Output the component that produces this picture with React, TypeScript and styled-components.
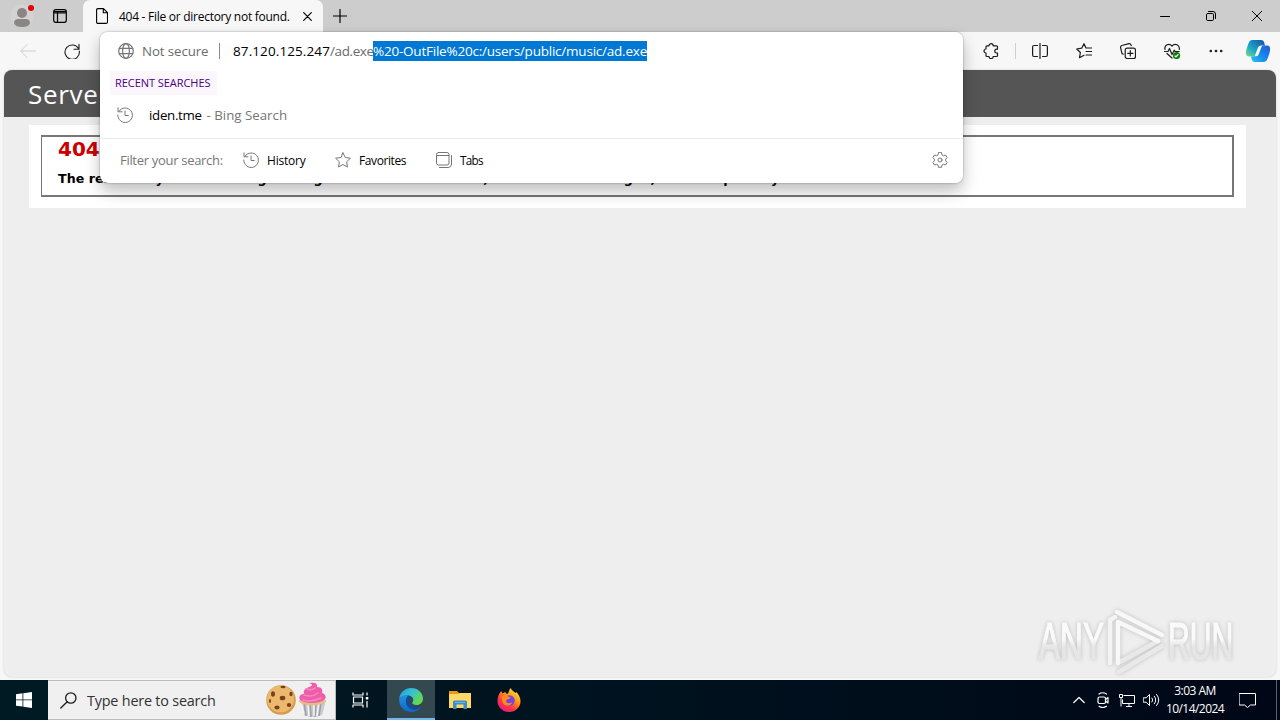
import React from 'react'
import styled, { createGlobalStyle, css } from 'styled-components'

const GlobalStyle = createGlobalStyle`
  * {
    box-sizing: border-box;
  }

  body {
    margin: 0;
    overflow: hidden;
    font-family: 'Open Sans', 'Noto Sans', sans-serif;
    font-size: 12px;
    color: #000;
  }

  svg {
    display: block;
    flex: none;
  }
`

const Screen = styled.div`
  position: relative;
  display: flex;
  flex-direction: column;
  width: 1280px;
  height: 720px;
  background: #f7f7f7;
`

const center = css`
  display: flex;
  align-items: center;
  justify-content: center;
`

const TabStrip = styled.header`
  display: flex;
  height: 32px;
  background: #cdcdcd;
`

const Slot = styled.div<{ $width: number }>`
  ${center}
  flex: none;
  width: ${props => props.$width}px;
`

const Profile = styled(Slot)`
  position: relative;
  color: #8b8685;
`

const ProfileDot = styled.i`
  position: absolute;
  top: 5px;
  left: 28px;
  width: 6px;
  height: 6px;
  border-radius: 50%;
  background: #e3000b;
`

const Tab = styled.div`
  display: flex;
  align-items: center;
  width: 240px;
  padding-left: 13px;
  background: #f7f7f7;
  border-radius: 7px 7px 0 0;
`

const Text = styled.span<{ $width?: number; $size?: number; $spacing?: number; $color?: string }>`
  flex: none;
  white-space: pre;
  width: ${props => (props.$width ? `${props.$width}px` : 'auto')};
  font-size: ${props => props.$size || 12}px;
  letter-spacing: ${props => props.$spacing || 0}px;
  color: ${props => props.$color || 'inherit'};
`

const Spacer = styled.div`
  flex: 1;
`

const Toolbar = styled.div`
  display: flex;
  height: 38px;
  padding: 0 2px 0 6px;
  color: #1b1b1b;
`

const Divider = styled.i<{ $height: number; $color: string }>`
  width: 1px;
  height: ${props => props.$height}px;
  background: ${props => props.$color};
`

const Page = styled.main`
  height: 607px;
  margin: 0 4px;
  overflow: hidden;
  background: #eee;
  border-radius: 8px;
  box-shadow: 0 0 2px #c5c5c5;
`

const PageHeader = styled.h1`
  height: 47px;
  margin: 0;
  padding-left: 24px;
  background: #555;
  color: #fff;
  font-size: 26px;
  font-weight: 500;
  line-height: 49px;
  letter-spacing: 0.7px;
`

const Content = styled.section`
  width: 1217px;
  height: 83px;
  margin: 8px 0 0 25px;
  padding: 10px 12px 11px;
  background: #fff;
`

const ErrorBox = styled.div`
  height: 62px;
  padding-left: 16px;
  border: 1.5px solid #777;
  border-width: 1px 2px 2px 1px;
  border-top-width: 2px;
  font-family: 'DejaVu Sans', sans-serif;
  white-space: nowrap;
`

const ErrorTitle = styled.h2`
  margin: 0;
  color: #c00;
  font-size: 20px;
  line-height: 24px;
`

const ErrorText = styled.h3`
  margin: 8px 0 0;
  font-size: 12.6px;
  line-height: 20px;
  letter-spacing: 0.05px;
`

const OmniboxShadow = styled.div`
  position: absolute;
  top: 32px;
  left: 100px;
  width: 863px;
  height: 151px;
  border-radius: 8px;
  box-shadow: 0 0 2px rgba(0, 0, 0, 0.4), 0 8px 16px rgba(0, 0, 0, 0.26);
`

const Omnibox = styled.div`
  position: absolute;
  top: 32px;
  left: 100px;
  width: 863px;
  height: 151px;
  overflow: hidden;
  background: #fff;
  border-radius: 8px;
`

const AddressRow = styled.div`
  display: flex;
  align-items: center;
  height: 38px;
  padding-left: 18px;
`

const Url = styled.div`
  display: flex;
  align-items: center;
  margin-left: 13px;
  line-height: 20px;
`

const Selection = styled(Text)`
  height: 20px;
  background: #0078d4;
  color: #fff;
`

const SectionLabel = styled.div`
  display: flex;
  align-items: center;
  width: 107px;
  height: 24px;
  margin: 1px 0 0 10px;
  padding: 0 0 1px 5px;
  background: #faf6fb;
`

const Suggestion = styled.div`
  display: flex;
  align-items: center;
  height: 40px;
  padding-left: 17px;
  color: #767676;
`

const Filters = styled.div`
  display: flex;
  align-items: center;
  height: 43px;
  margin-top: 3px;
  padding: 0 15px 0 20px;
  border-top: 1px solid #ebebeb;
  color: #767676;
`

const FilterButton = styled.div<{ $width: number }>`
  display: flex;
  align-items: center;
  gap: 8px;
  width: ${props => props.$width}px;
`

const Watermark = styled.div`
  position: absolute;
  left: 1034px;
  top: 606px;
  filter: drop-shadow(0 0 2px rgba(0, 0, 0, 0.2));
`

const Taskbar = styled.footer`
  display: flex;
  height: 40px;
  margin-top: 3px;
  background: linear-gradient(90deg, #001a23, #00121f 50%, #000717);
  color: #fff;
`

const SearchBox = styled.div`
  display: flex;
  align-items: center;
  width: 288px;
  padding-left: 12px;
  background: #f0f0f0;
  border: 1px solid #b9bcbd;
  border-left: 0;
  color: #1d1d1d;
`

const TaskButton = styled.div<{ $active?: boolean }>`
  ${center}
  width: ${props => (props.$active ? 48 : 49)}px;
  background: ${props => (props.$active ? '#344850' : 'transparent')};
  box-shadow: ${props => (props.$active ? 'inset 0 -2px #76b5e8' : 'none')};
`

const Clock = styled.div`
  display: flex;
  flex-direction: column;
  align-items: center;
  width: 64px;
  padding-top: 2px;
  line-height: 18px;
`

const ShowDesktop = styled.div`
  width: 4px;
  margin-left: 8px;
  border-left: 1px solid #59616d;
`

interface IconProps {
  size?: number
  width?: number
  stroke?: number
  children: React.ReactNode
}

const Icon = ({ size = 16, width, stroke = 1, children }: IconProps) => (
  <svg
    width={width || size}
    height={size}
    viewBox={`0 0 ${width || size} ${size}`}
    fill="none"
    stroke="currentColor"
    strokeWidth={stroke}
    strokeLinecap="round"
    strokeLinejoin="round"
  >
    {children}
  </svg>
)

const HistoryIcon = () => (
  <Icon>
    <path d="M2 4.2A7.3 7.3 0 1 1 .8 8M1 .8v4h4M8 4v4.5h3.2" />
  </Icon>
)

const GlobeIcon = () => (
  <Icon stroke={1.2}>
    <circle cx="8" cy="8" r="7.3" />
    <ellipse cx="8" cy="8" rx="3.4" ry="7.3" />
    <path d="M1.3 5.4h13.4M1.3 10.6h13.4" />
  </Icon>
)

const CopilotIcon = () => (
  <svg width="26" height="24" viewBox="0 0 26 24">
    <defs>
      <linearGradient id="copilotTop" x1="0" y1="1" x2="1" y2="0">
        <stop offset="0" stopColor="#7be07f" />
        <stop offset="0.4" stopColor="#1ba5c8" />
        <stop offset="1" stopColor="#1450a8" />
      </linearGradient>
      <linearGradient id="copilotBottom" x1="0" y1="1" x2="1" y2="0">
        <stop offset="0" stopColor="#24c4ee" />
        <stop offset="0.5" stopColor="#1688ee" />
        <stop offset="1" stopColor="#2457d6" />
      </linearGradient>
    </defs>
    <path
      d="M8 1h8c2 0 2.700 1 3.200 2.400L20 6.500h-3c-2 0-2.800 1-3.400 2.600L11 15c-.6 1.800-1.600 2.500-3.400 2.500H4C1.500 17.500.4 15.500 1 12.600 1.600 9 3 5.500 4.200 3 5 1.600 6.300 1 8 1Z"
      fill="url(#copilotTop)"
    />
    <path
      d="M18 23h-8c-2 0-2.700-1-3.200-2.400L6 17.500h1.700c2 0 3.300-.8 4-2.400L14.500 9c.6-1.800 1.600-2.500 3.400-2.500H22c2.500 0 3.600 2 3 4.900-.6 3.600-2 7.100-3.200 9.600-.8 1.400-2.100 2-3.800 2Z"
      fill="url(#copilotBottom)"
    />
    <path d="M13 8.600q.7-1.900 2.700-1.900h1.700q-.7.600-1.100 1.700l-2.700 7q-.8 1.900-2.700 1.900H9.300q.6-.5 1-1.700Z" fill="#f4fbff" />
  </svg>
)

const EdgeIcon = () => (
  <svg width="24" height="24" viewBox="0 0 24 24">
    <defs>
      <linearGradient id="edgeTop" x1="0" y1="0" x2="1" y2="0.6">
        <stop offset="0" stopColor="#1b9de2" />
        <stop offset="0.5" stopColor="#35c1d0" />
        <stop offset="1" stopColor="#66d94b" />
      </linearGradient>
      <linearGradient id="edgeLeft" x1="0" y1="0" x2="0" y2="1">
        <stop offset="0" stopColor="#2092e0" />
        <stop offset="1" stopColor="#1267c4" />
      </linearGradient>
    </defs>
    <path d="M.2 11C1 4 6 0 12 0c7 0 12 5 12 10.500 0 4-3 6.500-6.500 6.500-3 0-4.500-1.200-4.200-2.500C15.500 12 14 8.200 9.500 7.500 5 7 1.800 8.500.2 11Z" fill="url(#edgeTop)" />
    <path d="M.2 11C2 8 6 6.500 9.500 7.500 6 10.500 6 20 14 21.500c3 .5 5.500-.5 8-3C19.500 22.500 16 24 12 24 5 24-.5 18 .2 11Z" fill="url(#edgeLeft)" />
    <path d="M9.500 7.500C5 11 6 20 14 21.500c3 .5 6-.8 8-3.500-5 2-11.500 0-11.500-5 0-1.700.8-2.500 1.800-3-.6-1.400-1.500-2.200-2.800-2.500Z" fill="#154b96" />
  </svg>
)

const FolderIcon = () => (
  <svg width="22" height="20" viewBox="0 0 22 20">
    <path d="M0 1h8l2 2h11v4H0Z" fill="#e89b16" />
    <path d="M0 4h9l2-1h11v15H0Z" fill="#ffd966" />
    <path d="M4 19v-7q0-1.500 1.500-1.500h11q1.500 0 1.500 1.500v7h-3.500v-4.500h-7V19Z" fill="#3a8fcc" />
    <path d="M6 12.500h10" stroke="#69b7ea" />
  </svg>
)

const FirefoxIcon = () => (
  <svg width="24" height="24" viewBox="0 0 24 24">
    <defs>
      <linearGradient id="fox" x1="0.9" y1="0" x2="0.2" y2="1">
        <stop offset="0" stopColor="#fff44f" />
        <stop offset="0.4" stopColor="#ff980e" />
        <stop offset="0.7" stopColor="#ff3647" />
        <stop offset="1" stopColor="#e31587" />
      </linearGradient>
    </defs>
    <path d="M2.500 5.500 4 3l1.500 2.500L8 4l2 2c2-.5 2-4.500 3.500-6 1.500 3 3.500 3.500 5 5l1-1c2.500 3 4 6 4 9.200C23.500 19 18.500 24 12 24S.5 19 .5 13c0-3 .8-5.500 2-7.500Z" fill="url(#fox)" />
    <circle cx="12.500" cy="12.500" r="5.200" fill="#7542e5" />
    <path d="M5 8c3-1.500 5-.8 7 .7L14 10c-2 1.500-4.500 1-5 3 .5 2.500 4 3 6 1 0 4-7 5-9 1C5 13 4.500 10 5 8Z" fill="#ff8a1c" />
  </svg>
)

const TreatsIcon = () => (
  <svg width="64" height="36" viewBox="0 0 64 36">
    <circle cx="17" cy="18" r="14.800" fill="#d79a4b" />
    <circle cx="16.500" cy="17" r="13.500" fill="#ebb86d" />
    <g fill="#74421c">
      <ellipse cx="9" cy="12" rx="2" ry="2.800" />
      <ellipse cx="18.500" cy="16" rx="2.800" ry="2.300" />
      <ellipse cx="19" cy="5" rx="2.500" ry="1.300" />
      <ellipse cx="27" cy="12" rx="1.600" ry="2.300" />
      <ellipse cx="13" cy="25.500" rx="2.600" ry="1.900" />
      <ellipse cx="25" cy="23" rx="2.200" ry="1.900" />
      <ellipse cx="6" cy="19" rx="1" ry="2" />
    </g>
    <path d="M36 18h26l-4 15q-9 4-18 0Z" fill="#c9c9ce" />
    <path d="m40 20 2 14m4-14 1 15m5-15-1 15m6-15-2 14" stroke="#9c9ea6" strokeWidth="1.500" />
    <path d="m37 20 3 12m4-11 1 13m5-13v13m5-14-2 14" stroke="#f5f5f5" strokeWidth="1.500" />
    <path d="M35 18q14 5 27 0-1 4-5 4-9 3-18 0-4-1-4-4Z" fill="#e7bd83" />
    <path d="M45 1c5-1 9 0 8 4 5 0 6 3 5 6 4 1 5 5 2 7-5 4-19 4-24 0-2-4 1-6 4-6-1-4 2-6 5-7 4-1 4-3 0-4Z" fill="#ee5da8" />
    <path d="M40 13c5 2 10 1 14-2M43 7c3 1 6 1 8-1M39 18c6 2 12 1 18-2" fill="none" stroke="#f98ac4" strokeWidth="1.500" strokeLinecap="round" />
  </svg>
)

const AnyRunLogo = () => (
  <svg width="230" height="70" viewBox="0 0 230 70">
    <defs>
      <linearGradient id="letters" x1="0" y1="0" x2="0" y2="1">
        <stop offset="0.45" stopColor="#fafafa" />
        <stop offset="0.6" stopColor="#e6e6e6" />
      </linearGradient>
    </defs>
    <g
      fontFamily="'Liberation Sans', sans-serif"
      fontSize="51"
      fill="url(#letters)"
      stroke="url(#letters)"
      strokeWidth="1.200"
    >
      <text transform="translate(5 53) scale(0.62 1)">ANY</text>
      <text transform="translate(134 53) scale(0.59 1)">RUN</text>
    </g>
    <g fill="none" strokeWidth="4.500" strokeLinejoin="round" strokeLinecap="round">
      <path d="M85 66 128 40M84 57l40-22" stroke="#e9e9e9" />
      <path d="m76 57V14l5-3" stroke="#f3f3f3" />
      <path d="M83 6 128 29M84 57V16l40 19" stroke="#f8f8f8" />
    </g>
  </svg>
)

export default function App() {
  return (
    <>
      <GlobalStyle />
      <Screen>
        <TabStrip>
          <Profile $width={44}>
            <Icon size={24}>
              <circle cx="12" cy="12" r="11.500" fill="#d5d3d2" stroke="none" />
              <circle cx="12" cy="9" r="5" fill="currentColor" stroke="none" />
              <path d="M4 19c0-3 2-4 4-4h8c2 0 4 1 4 4-1 3-4 4-8 4s-7-1-8-4Z" fill="currentColor" stroke="none" />
            </Icon>
            <ProfileDot />
          </Profile>
          <Slot $width={32}>
            <Icon size={14} stroke={1.2}>
              <rect x=".7" y=".7" width="12.600" height="12.600" rx="2" />
              <path d="M1 2.500h12M1.500 3.800h11M4.500 3v10" />
            </Icon>
          </Slot>
          <Slot $width={7} />
          <Tab>
            <Icon width={12} size={16} stroke={1.1}>
              <path d="M2 .6h5.500l4 4V14q0 1.400-1.400 1.400H2Q.6 15.400.6 14V2Q.6.6 2 .6ZM7.300.8v4h4" />
            </Icon>
            <Slot $width={11} />
            <Text $width={184} $size={12} $spacing={-0.27}>
              404 - File or directory not found.
            </Text>
            <Icon size={9} stroke={1.2}>
              <path d="m.7.7 7.600 7.600m0-7.600L.7 8.300" />
            </Icon>
          </Tab>
          <Slot $width={34}>
            <Icon size={14} stroke={1.2}>
              <path d="M7 .5v13M.5 7h13" />
            </Icon>
          </Slot>
          <Spacer />
          <Slot $width={46}>
            <Icon size={10}>
              <path d="M.5 5.500h9" />
            </Icon>
          </Slot>
          <Slot $width={46}>
            <Icon size={10}>
              <rect x=".5" y="2.500" width="7" height="7" rx="1.200" />
              <path d="M2.500.5H7Q9.500.5 9.500 3v4.500" />
            </Icon>
          </Slot>
          <Slot $width={46}>
            <Icon size={10}>
              <path d="m.3.300 9.400 9.400m0-9.400L.3 9.700" />
            </Icon>
          </Slot>
        </TabStrip>

        <Toolbar>
          <Slot $width={44}>
            <Icon>
              <path d="M15.500 8H.8m6.500-6.800L.8 8l6.500 6.800" stroke="#cfcfcf" />
            </Icon>
          </Slot>
          <Slot $width={44}>
            <Icon stroke={1.1}>
              <path d="M14.800 6.300A7.200 7.200 0 1 0 15.300 8M15 1.200v5h-5" />
            </Icon>
          </Slot>
          <Spacer />
          <Slot $width={44}>
            <Icon stroke={1.2}>
              <path d="M6 2.800a2.100 2.100 0 0 1 4.200 0h3.300q1 0 1 1v2.400h-.8a1.900 1.900 0 0 0 0 3.800h.8v2.500q0 1-1 1h-3.300a2.100 2.100 0 0 1-4.200 0H4q-1 0-1-1V10a2 2 0 0 1 0-4V3.800q0-1 1-1Z" />
            </Icon>
          </Slot>
          <Slot $width={5}>
            <Divider $height={16} $color="#cfcfcf" />
          </Slot>
          <Slot $width={44}>
            <Icon stroke={1.2}>
              <path d="M8 .5v15M5.500 2.500H2Q.6 2.500.6 4v8Q.6 13.500 2 13.500h3.500M10.500 2.500H14q1.400 0 1.400 1.500v8q0 1.500-1.400 1.500h-3.500" />
            </Icon>
          </Slot>
          <Slot $width={44}>
            <Icon stroke={1.2}>
              <path d="M15.500 5H10L8 .7 5.700 5.200.7 6l3.700 3.500-.9 5.200L8 12.300M10 8.500h5.500M10 12h5.500" />
            </Icon>
          </Slot>
          <Slot $width={44}>
            <Icon stroke={1.2}>
              <rect x="5.200" y="5.200" width="10.300" height="10.300" rx="2" />
              <path d="M10.300 7.700v5.300M7.700 10.300H13M3.200 11.200Q2 11 1.800 9.800L.6 4.600Q.4 3 1.800 2.500L9 .7q1.500-.3 2 1.200l.2.800" />
            </Icon>
          </Slot>
          <Slot $width={44}>
            <Icon width={17} size={16} stroke={1.2}>
              <path d="M1 6.500C0 2 5-.5 8 3c3-3.500 8-1 7.300 3.500M.5 8.500H4l1.500-3 2.500 6 2.200-4.300 1 1.300h4M3 10.500 8 15" />
              <circle cx="12.500" cy="12.500" r="3.600" fill="#107c10" stroke="none" />
              <path d="m11 13 .9.900 2.200-2.300" stroke="#fff" />
            </Icon>
          </Slot>
          <Slot $width={44}>
            <Icon width={14} size={4}>
              <g fill="currentColor" stroke="none">
                <circle cx="1.800" cy="2" r="1.300" />
                <circle cx="7" cy="2" r="1.300" />
                <circle cx="12.200" cy="2" r="1.300" />
              </g>
            </Icon>
          </Slot>
          <Slot $width={40}>
            <CopilotIcon />
          </Slot>
        </Toolbar>

        <Page>
          <PageHeader>Server Error</PageHeader>
          <Content>
            <ErrorBox>
              <ErrorTitle>404 - File or directory not found.</ErrorTitle>
              <ErrorText>
                The resource you are looking for might have been removed, had its name changed, or is
                temporarily unavailable.
              </ErrorText>
            </ErrorBox>
          </Content>
        </Page>

        <Taskbar>
          <Slot $width={48}>
            <svg width="16" height="16" viewBox="0 0 16 16" fill="#fff">
              <path d="M0 2.200 6.500 1.300v6.200H0ZM7.300 1.200 16 0v7.500H7.300ZM0 8.300h6.500v6.300L0 13.700ZM7.300 8.300H16V16l-8.700-1.300Z" />
            </svg>
          </Slot>
          <SearchBox>
            <Icon width={17} size={17} stroke={1.300}>
              <circle cx="10.800" cy="6" r="5.200" />
              <path d="M7.200 9.800.8 16" />
            </Icon>
            <Slot $width={10} />
            <Text $width={177} $size={14.4} $spacing={-0.2} $color="#333">
              Type here to search
            </Text>
            <TreatsIcon />
          </SearchBox>
          <Slot $width={49}>
            <Icon width={17} size={16} stroke={1.200}>
              <path d="M1 .5v2.500h10V.5M1 15.500V13h10v2.500M1.500 5h9v6h-9ZM15 .5v3M15 9v6.500" strokeLinecap="butt" />
              <path d="M13.800 5h2.500v2.500h-2.500Z" fill="currentColor" stroke="none" />
            </Icon>
          </Slot>
          <Slot $width={2} />
          <TaskButton $active>
            <EdgeIcon />
          </TaskButton>
          <TaskButton>
            <FolderIcon />
          </TaskButton>
          <TaskButton>
            <FirefoxIcon />
          </TaskButton>
          <Spacer />
          <Slot $width={24}>
            <Icon width={12} size={8} stroke={1.2}>
              <path d="m.8 6.500 5.200-5 5.200 5" />
            </Icon>
          </Slot>
          <Slot $width={24}>
            <Icon stroke={1.2}>
              <rect x="3" y="5" width="7.500" height="6.500" rx="1.500" />
              <path d="m10.500 7.500 2.500-2v5.500l-2.500-2M4 2Q7.500-.5 11.500 2M4 14.300q3.500 2.500 7.500 0" />
            </Icon>
          </Slot>
          <Slot $width={24}>
            <Icon size={16} width={16}>
              <path d="M4.500 3.500h11v8h-12V7.500M7 14.500h6M10 11.500v3M.5 2.500h3v3h-3ZM2 5.500v9" strokeLinecap="butt" strokeLinejoin="miter" />
            </Icon>
          </Slot>
          <Slot $width={24}>
            <Icon width={17} size={14}>
              <path d="M.6 4.800h2.500L6.500 1.500v11L3.100 9.200H.6ZM9 5q1.500 2 0 4M11.300 3.200q3 3.800 0 7.600M13.600 1.500q4.500 5.500 0 11" />
            </Icon>
          </Slot>
          <Clock>
            <Text $size={12} $spacing={-0.55}>3:03 AM</Text>
            <Text $size={12} $spacing={-0.55}>10/14/2024</Text>
          </Clock>
          <Slot $width={41}>
            <Icon width={17} size={16}>
              <path d="M.5 1.500h16v11.500h-5l-3 2.500-3-2.500h-5Z" strokeLinejoin="miter" />
            </Icon>
          </Slot>
          <ShowDesktop />
        </Taskbar>

        <OmniboxShadow />
        <Omnibox>
          <AddressRow>
            <Text $color="#767676">
              <GlobeIcon />
            </Text>
            <Slot $width={8} />
            <Text $width={77} $size={13.3} $spacing={-0.1} $color="#6b6b6b">Not secure</Text>
            <Divider $height={16} $color="#8a8a8a" />
            <Url>
              <Text $width={97} $size={13.5} $spacing={0.1}>87.120.125.247</Text>
              <Text $width={43} $size={13.5} $spacing={-0.4} $color="#6b6b6b">/ad.exe</Text>
              <Selection $width={274} $size={13.5} $spacing={-0.22}>
                %20-OutFile%20c:/users/public/music/ad.exe
              </Selection>
            </Url>
          </AddressRow>
          <SectionLabel>
            <Text $size={11} $spacing={-0.05} $color="#4b0082">RECENT SEARCHES</Text>
          </SectionLabel>
          <Suggestion>
            <HistoryIcon />
            <Slot $width={16} />
            <Text $width={54} $size={13.3} $spacing={-0.3} $color="#000">iden.tme</Text>
            <Text $size={13.3}> - Bing Search</Text>
          </Suggestion>
          <Filters>
            <Text $width={123} $size={13} $spacing={-0.3}>Filter your search:</Text>
            <FilterButton $width={92}>
              <HistoryIcon />
              <Text $color="#000" $spacing={-0.2}>History</Text>
            </FilterButton>
            <FilterButton $width={101}>
              <Icon>
                <path d="m8 .8 2.200 4.700 5.200.7-3.800 3.600.9 5.200L8 12.500 3.500 15l.9-5.200L.6 6.200l5.200-.7Z" />
              </Icon>
              <Text $color="#000" $spacing={-0.4}>Favorites</Text>
            </FilterButton>
            <FilterButton $width={60}>
              <Icon>
                <rect x=".5" y=".5" width="12.500" height="12.500" rx="2" />
                <path d="M.5 3.500H13M15.500 3.500V12q0 3.500-3.500 3.500H3.500" />
              </Icon>
              <Text $size={11.7} $color="#000" $spacing={-0.7}>Tabs</Text>
            </FilterButton>
            <Spacer />
            <Icon>
              <path d="m6.500.7-.5 2.200-1.400.8-2.200-.7L.8 5.700l1.700 1.500v1.600L.8 10.300 2.400 13l2.200-.7 1.400.8.500 2.200h3l.5-2.200 1.400-.8 2.200.7 1.600-2.700-1.700-1.500V7.200l1.700-1.500L13.600 3l-2.200.7-1.400-.8L9.500.7Z" />
              <circle cx="8" cy="8" r="2" />
            </Icon>
          </Filters>
        </Omnibox>

        <Watermark>
          <AnyRunLogo />
        </Watermark>
      </Screen>
    </>
  )
}
